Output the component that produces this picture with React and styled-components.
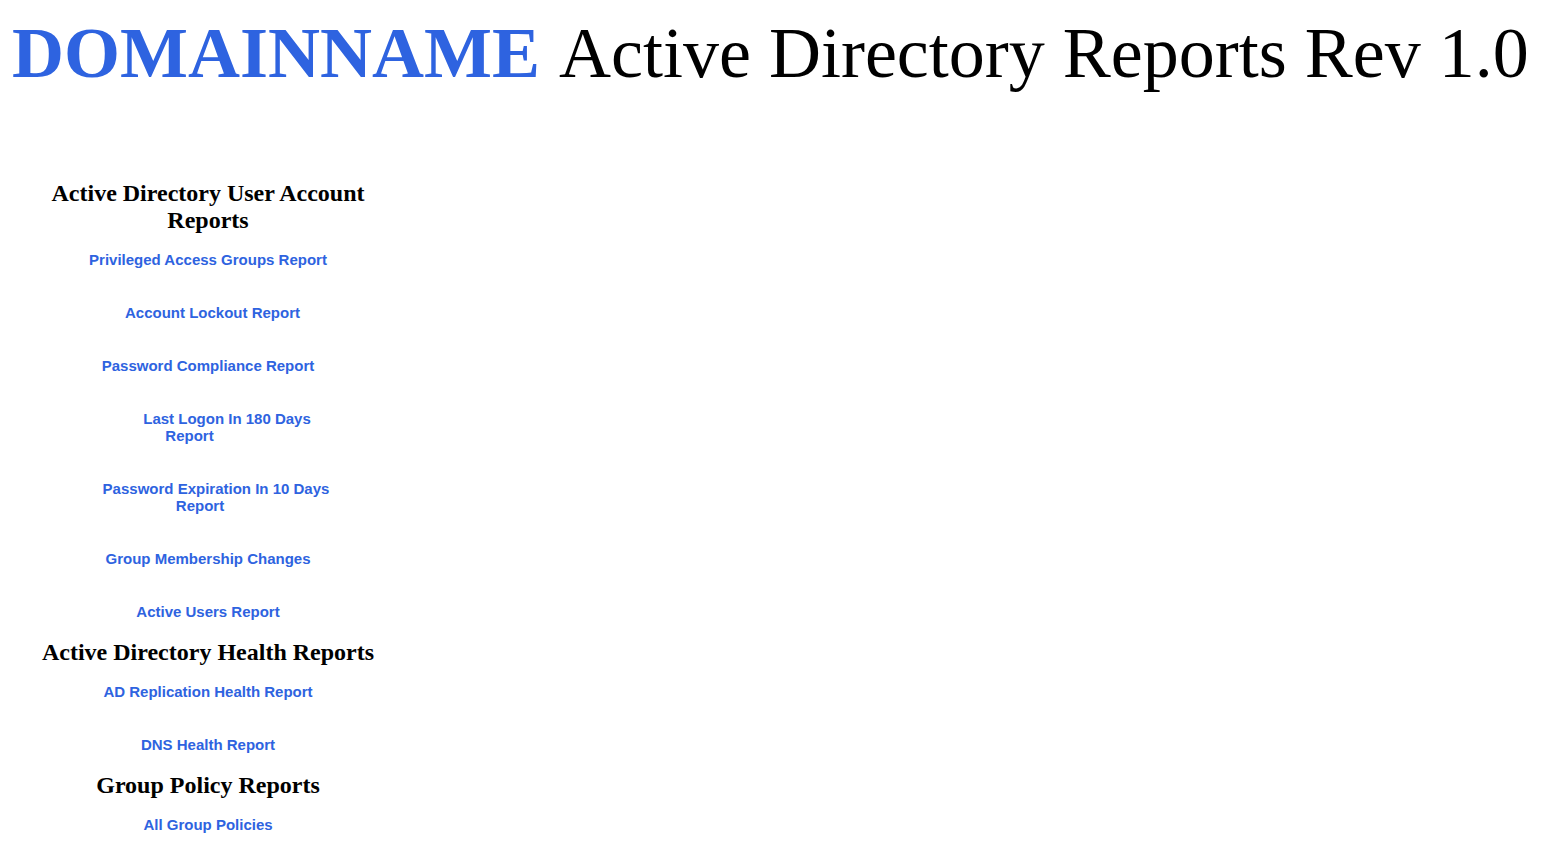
import React from 'react';
import styled, { createGlobalStyle } from 'styled-components';

const GlobalStyle = createGlobalStyle`
    body {
        margin: 8px;
        background: #ffffff;
        font-family: "Liberation Serif", "Times New Roman", serif;
        color: #000000;
    }
`

const sections = [
    {
        title: 'Active Directory User Account Reports',
        links: [
            { text: ['Privileged Access Groups Report'] },
            { text: ['Account Lockout Report'], lead: 9 },
            { text: ['Password Compliance Report'] },
            { text: ['Last Logon In 180 Days', 'Report'], lead: 38, trail: 37 },
            { text: ['Password Expiration In 10 Days', 'Report'], lead: 16, trail: 16 },
            { text: ['Group Membership Changes'] },
            { text: ['Active Users Report'] },
        ],
    },
    {
        title: 'Active Directory Health Reports',
        links: [
            { text: ['AD Replication Health Report'] },
            { text: ['DNS Health Report'] },
        ],
    },
    {
        title: 'Group Policy Reports',
        links: [
            { text: ['All Group Policies'] },
        ],
    },
];

function App() {
    return (
        <>
            <GlobalStyle />
            <Title>
                <Domain>DOMAINNAME</Domain> Active Directory Reports Rev 1.0
            </Title>
            <Sidebar>
                {sections.map((section) => (
                    <Section key={section.title}>
                        <SectionHeading>{section.title}</SectionHeading>
                        {section.links.map((link) => (
                            <LinkItem key={link.text.join(' ')}>
                                {link.text.length === 1 ? (
                                    <ReportLink href="#" $lead={link.lead}>{link.text[0]}</ReportLink>
                                ) : (
                                    <ReportLink href="#">
                                        <LinkLine $lead={link.lead}>{link.text[0]}</LinkLine>
                                        <br />
                                        <LinkLine $trail={link.trail}>{link.text[1]}</LinkLine>
                                    </ReportLink>
                                )}
                            </LinkItem>
                        ))}
                    </Section>
                ))}
            </Sidebar>
        </>
    );
}

export default App;

const Title = styled.h1`
    margin: 0;
    padding-left: 4px;
    font-size: 72px;
    font-weight: normal;
    line-height: 90px;
    white-space: nowrap;
`

const Domain = styled.span`
    color: #2e63e0;
    font-weight: bold;
    margin-right: 5px;
`

const Sidebar = styled.div`
    width: 400px;
    margin-top: 82px;
    display: flex;
    flex-direction: column;
`

const Section = styled.div`
    display: flex;
    flex-direction: column;
    text-align: center;
`

const SectionHeading = styled.h3`
    margin: 0;
    font-size: 24px;
    font-weight: bold;
    line-height: 27px;
`

const LinkItem = styled.div`
    padding: 17px 0 19px;
    font-family: "Liberation Sans", Arial, sans-serif;
    font-size: 15px;
    font-weight: bold;
    line-height: 17px;
`

const ReportLink = styled.a`
    margin-left: ${(p) => p.$lead || 0}px;
    color: #2e63e0;
    text-decoration: none;
`

const LinkLine = styled.span`
    margin-left: ${(p) => p.$lead || 0}px;
    margin-right: ${(p) => p.$trail || 0}px;
`
